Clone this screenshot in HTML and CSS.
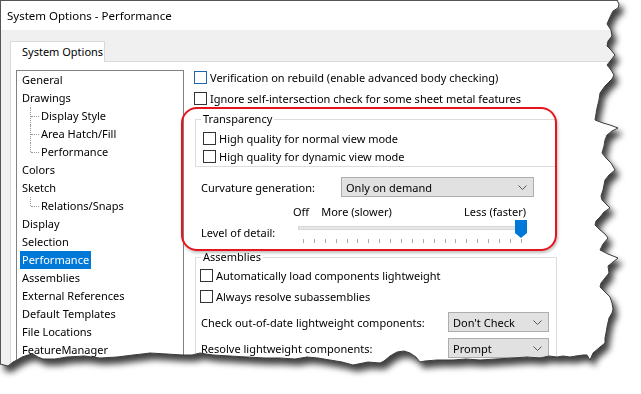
FILE: index.html
```html
<!DOCTYPE html>
<html lang="en">
<head>
  <meta charset="UTF-8">
  <title>System Options - Performance</title>
  <link rel="stylesheet" href="styles.css">
</head>
<body>
  <div class="paper">
    <div class="dialog">
      <div class="titlebar">System Options - Performance</div>
      <div class="tabs">
        <div class="tab">System Options</div>
      </div>
      <div class="panel">
        <ul class="tree">
          <li>General</li>
          <li>Drawings</li>
          <li class="child">Display Style</li>
          <li class="child">Area Hatch/Fill</li>
          <li class="child last">Performance</li>
          <li>Colors</li>
          <li>Sketch</li>
          <li class="child last">Relations/Snaps</li>
          <li>Display</li>
          <li>Selection</li>
          <li class="selected"><span>Performance</span></li>
          <li>Assemblies</li>
          <li>External References</li>
          <li>Default Templates</li>
          <li>File Locations</li>
          <li>FeatureManager</li>
        </ul>

        <div class="options">
          <label class="check"><span class="box hover"></span>Verification on rebuild (enable advanced body checking)</label>
          <label class="check"><span class="box"></span>Ignore self-intersection check for some sheet metal features</label>

          <fieldset class="group transparency">
            <legend>Transparency</legend>
            <label class="check"><span class="box"></span>High quality for normal view mode</label>
            <label class="check"><span class="box"></span>High quality for dynamic view mode</label>
          </fieldset>

          <div class="field curvature">
            <span class="label">Curvature generation:</span>
            <div class="select wide">
              <span>Only on demand</span>
              <svg width="9" height="5" viewBox="0 0 9 5"><polyline points="0.5,0.5 4.5,4.5 8.5,0.5" fill="none" stroke="#555" stroke-width="1"/></svg>
            </div>
          </div>

          <div class="detail">
            <div class="scale">
              <span>Off</span>
              <span class="more">More (slower)</span>
              <span class="less">Less (faster)</span>
            </div>
            <span class="label">Level of detail:</span>
            <div class="slider">
              <div class="track"></div>
              <svg class="thumb" width="12" height="18" viewBox="0 0 12 18"><path d="M0 0H12V13L6 18L0 13Z" fill="#0078d7"/></svg>
              <div class="ticks">
                <span></span><span></span><span></span><span></span><span></span><span></span><span></span>
                <span></span><span></span><span></span><span></span><span></span><span></span><span></span>
                <span></span><span></span><span></span><span></span><span></span><span></span><span></span>
              </div>
            </div>
          </div>

          <fieldset class="group assemblies">
            <legend>Assemblies</legend>
            <label class="check"><span class="box"></span>Automatically load components lightweight</label>
            <label class="check"><span class="box"></span>Always resolve subassemblies</label>
            <div class="field first">
              <span class="label">Check out-of-date lightweight components:</span>
              <div class="select small">
                <span>Don't Check</span>
                <svg width="9" height="5" viewBox="0 0 9 5"><polyline points="0.5,0.5 4.5,4.5 8.5,0.5" fill="none" stroke="#555" stroke-width="1"/></svg>
              </div>
            </div>
            <div class="field">
              <span class="label">Resolve lightweight components:</span>
              <div class="select small">
                <span>Prompt</span>
                <svg width="9" height="5" viewBox="0 0 9 5"><polyline points="0.5,0.5 4.5,4.5 8.5,0.5" fill="none" stroke="#555" stroke-width="1"/></svg>
              </div>
            </div>
          </fieldset>
        </div>
      </div>

      <!-- red callout drawn over the performance settings -->
      <div class="callout"></div>
    </div>

    <svg class="edge" width="641" height="394" viewBox="0 0 641 394">
      <polyline fill="none" stroke="#3a3a3a" stroke-width="1" points="617,0 619,4 618,8 613,11 610,17 607,24 611,30 612,36 608,41 607,46 611,50 615,55 611,60 607,65 611,70 614,75 612,79 605,86 600,93 599,100 597,108 596,114 595,120 603,123 610,125 618,128 612,131 607,135 605,140 604,146 602,153 606,158 611,163 615,170 609,175 605,180 604,185 603,190 601,196 602,200 606,204 610,208 604,212 600,217 596,221 595,225 600,230 605,234 608,238 603,244 600,250 608,254 618,258 613,262 608,266 609,273 605,278 601,283 600,287 605,292 610,297 612,303 613,309 612,313 609,318 607,327 606,333 605,338 605,343 600,347 593,353 590,360 587,355 583,355 576,356 570,357 563,356 557,357 549,356 540,358 527,357 513,358 496,359 480,360 466,359 453,360 437,360 425,361 420,362 416,357 410,353 404,351 397,352 390,356 384,361 380,363 368,362 353,365 342,362 330,360 318,358 307,357 295,359 280,358 265,358 247,357 230,356 213,355 206,354 200,353 192,355 183,355 167,354 150,353 142,354 133,355 117,357 100,358 84,356 67,357 55,359 43,359 38,357 33,354 28,355 22,357 17,360 13,362 8,366 4,365 0,364"/>
    </svg>
  </div>
</body>
</html>
```

FILE: styles.css
```css
* {
  box-sizing: border-box;
}

body {
  margin: 0;
  background: #fff;
  font-family: "Noto Sans", sans-serif;
  font-size: 11px;
  color: #000;
}

/* torn paper look: clipped dialog + drop shadow on the wrapper */
.paper {
  position: relative;
  width: 641px;
  height: 394px;
  filter: drop-shadow(4px 6px 3px rgba(0, 0, 0, 0.75));
}

.dialog {
  position: relative;
  width: 625px;
  height: 370px;
  overflow: hidden;
  background: #f0f0f0;
  border-top: 1px solid #555;
  border-left: 1px solid #555;
  clip-path: polygon(0 0, 617px 0, 619px 4px, 618px 8px, 613px 11px, 610px 17px, 607px 24px, 611px 30px, 612px 36px, 608px 41px, 607px 46px, 611px 50px, 615px 55px, 611px 60px, 607px 65px, 611px 70px, 614px 75px, 612px 79px, 605px 86px, 600px 93px, 599px 100px, 597px 108px, 596px 114px, 595px 120px, 603px 123px, 610px 125px, 618px 128px, 612px 131px, 607px 135px, 605px 140px, 604px 146px, 602px 153px, 606px 158px, 611px 163px, 615px 170px, 609px 175px, 605px 180px, 604px 185px, 603px 190px, 601px 196px, 602px 200px, 606px 204px, 610px 208px, 604px 212px, 600px 217px, 596px 221px, 595px 225px, 600px 230px, 605px 234px, 608px 238px, 603px 244px, 600px 250px, 608px 254px, 618px 258px, 613px 262px, 608px 266px, 609px 273px, 605px 278px, 601px 283px, 600px 287px, 605px 292px, 610px 297px, 612px 303px, 613px 309px, 612px 313px, 609px 318px, 607px 327px, 606px 333px, 605px 338px, 605px 343px, 600px 347px, 593px 353px, 590px 360px, 587px 355px, 583px 355px, 576px 356px, 570px 357px, 563px 356px, 557px 357px, 549px 356px, 540px 358px, 527px 357px, 513px 358px, 496px 359px, 480px 360px, 466px 359px, 453px 360px, 437px 360px, 425px 361px, 420px 362px, 416px 357px, 410px 353px, 404px 351px, 397px 352px, 390px 356px, 384px 361px, 380px 363px, 368px 362px, 353px 365px, 342px 362px, 330px 360px, 318px 358px, 307px 357px, 295px 359px, 280px 358px, 265px 358px, 247px 357px, 230px 356px, 213px 355px, 206px 354px, 200px 353px, 192px 355px, 183px 355px, 167px 354px, 150px 353px, 142px 354px, 133px 355px, 117px 357px, 100px 358px, 84px 356px, 67px 357px, 55px 359px, 43px 359px, 38px 357px, 33px 354px, 28px 355px, 22px 357px, 17px 360px, 13px 362px, 8px 366px, 4px 365px, 0 364px);
}

.edge {
  position: absolute;
  top: 0;
  left: 0;
  pointer-events: none;
}

.titlebar {
  height: 29px;
  line-height: 29px;
  padding-left: 6px;
  font-size: 11.5px;
  background: #fff;
}

.tabs {
  display: flex;
  padding: 11px 0 0 9px;
}

.tab {
  position: relative;
  z-index: 1;
  width: 95px;
  height: 21px;
  margin-bottom: -1px;
  padding-left: 11px;
  line-height: 20px;
  white-space: nowrap;
  background: #fff;
  border: 1px solid #d9d9d9;
  border-bottom: none;
}

.panel {
  display: flex;
  align-items: flex-start;
  gap: 10px;
  height: 400px;
  margin-left: 9px;
  padding: 5px 0 0 5px;
  background: #fff;
  border: 1px solid #d9d9d9;
}

/* left tree */
.tree {
  list-style: none;
  flex: none;
  width: 168px;
  height: 320px;
  margin: 3px 0 0;
  padding: 0;
  border: 1px solid #828282;
}

.tree li {
  position: relative;
  height: 18px;
  line-height: 18px;
  padding-left: 5px;
  white-space: nowrap;
}

.tree li.child {
  padding-left: 24px;
}

.tree li.child::before {
  content: "";
  position: absolute;
  left: 13px;
  top: 0;
  bottom: 0;
  border-left: 1px dotted #999;
}

.tree li.child.last::before {
  bottom: 9px;
}

.tree li.child::after {
  content: "";
  position: absolute;
  left: 14px;
  top: 9px;
  width: 8px;
  border-top: 1px dotted #999;
}

.tree li.selected span {
  display: inline-block;
  height: 18px;
  margin-left: -2px;
  padding: 0 2px;
  background: #0078d7;
  color: #fff;
}

/* right side */
.options {
  width: 380px;
  white-space: nowrap;
}

.check {
  display: flex;
  align-items: center;
  gap: 3px;
  height: 21px;
}

.box {
  flex: none;
  width: 13px;
  height: 13px;
  background: #fff;
  border: 1px solid #333;
}

.box.hover {
  border-color: #1c66b1;
}

.group {
  width: 362px;
  min-width: 0;
  margin: 2px 0 0 1px;
  padding: 2px 0 1px 7px;
  border: 1px solid #dcdcdc;
}

.group legend {
  margin-left: -2px;
  padding: 0 2px;
  line-height: 16px;
}

.transparency .check {
  height: 18px;
}

.field {
  display: flex;
  align-items: center;
  height: 20px;
  padding-left: 7px;
}

.curvature {
  margin-top: 10px;
}

.curvature .label {
  width: 140px;
}

.select {
  display: flex;
  align-items: center;
  justify-content: space-between;
  height: 20px;
  padding: 0 6px 0 4px;
  background: #e1e1e1;
  border: 1px solid #adadad;
}

.select.wide {
  width: 193px;
}

.select.small {
  width: 101px;
}

.detail {
  display: grid;
  grid-template-columns: 92px 237px;
  grid-template-rows: 16px 25px;
  margin-top: 7px;
  padding-left: 7px;
}

.scale {
  grid-column: 2;
  display: flex;
  line-height: 16px;
}

.scale .more {
  margin-left: 12px;
}

.scale .less {
  margin-left: auto;
  margin-right: 4px;
}

.detail .label {
  padding-top: 5px;
  line-height: 16px;
}

.slider {
  position: relative;
}

.track {
  width: 227px;
  height: 4px;
  margin: 6px 0 0 5px;
  background: #e7e7e7;
  border: 1px solid #d6d6d6;
}

.thumb {
  position: absolute;
  left: 222px;
  top: 0;
}

.ticks {
  display: flex;
  justify-content: space-between;
  width: 219px;
  height: 4px;
  margin: 9px 0 0 10px;
}

.ticks span {
  width: 1px;
  background: #ababab;
}

.assemblies {
  margin-top: 4px;
  padding: 0 0 10px 4px;
}

.assemblies legend {
  margin-left: 1px;
}

.assemblies .field {
  padding-left: 1px;
  margin-top: 6px;
}

.assemblies .field.first {
  margin-top: 5px;
}

.assemblies .field .label {
  width: 247px;
}

.callout {
  position: absolute;
  left: 180px;
  top: 106px;
  width: 376px;
  height: 144px;
  border: 2px solid #e8141b;
  border-radius: 16px;
  box-shadow: 1px 2px 3px rgba(0, 0, 0, 0.25);
}
```
